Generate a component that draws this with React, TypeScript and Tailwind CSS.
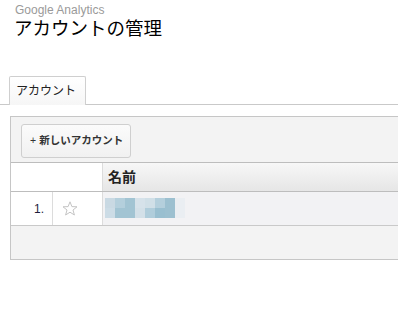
const jp = "font-['Liberation_Sans','Noto_Sans_CJK_JP',sans-serif]";

const mosaic = [
    ['#c9d9e3', '#b4cfdc', '#a2c4d3', '#d6e2ea', '#d0dfe7', '#b4cfdc', '#9cc0d0', '#eaeef2'],
    ['#ccdce6', '#a2c4d3', '#a2c4d3', '#d3e0e8', '#b0cddb', '#99bfd0', '#9cc0d0', '#eaeef2'],
];

function Star() {
    return (
        <svg width="16" height="15" viewBox="0 0 16 15">
            <polygon
                points="8,0.8 9.9,5.6 15,5.8 11,9 12.4,14 8,11.2 3.6,14 5,9 1,5.8 6.1,5.6"
                fill="none"
                stroke="#c4c4c4"
                strokeWidth="1"
            />
        </svg>
    );
}

export default function App() {
    return (
        <div className={`w-[398px] h-[321px] bg-white overflow-hidden ${jp}`}>
            {/* page title */}
            <div className="pl-[15px] pt-[3px]">
                <div className="text-[12px] leading-[14px] text-[#9a9a9a]">Google Analytics</div>
                <div className="text-[18.5px] leading-[22px] text-black -ml-px mt-[1px]">アカウントの管理</div>
            </div>

            {/* tabs */}
            <div className="mt-[36px] flex items-end border-b border-[#c9c9c9] h-[29px]">
                <div className="ml-[9px] -mb-px w-[77px] h-[29px] border border-b-0 border-[#cfcfcf] rounded-t-[2px] bg-gradient-to-b from-white to-[#f6f6f6] flex items-center pl-[6px] text-[12px] text-[#222]">
                    アカウント
                </div>
            </div>

            {/* accounts panel */}
            <div className="ml-[10px] mt-[11px] border-l border-t border-b border-[#c6c6c6]">
                <div className="h-[46px] bg-[#f3f3f3] border-b border-[#bdbdbd] pl-[10px] pt-[7px]">
                    <button className="w-[110px] h-[34px] rounded-[3px] border border-[#cfcfcf] bg-gradient-to-b from-[#fbfbfb] to-[#f1f1f1] text-[10.5px] font-bold text-[#333] flex items-center pl-[8px]">
                        <span className="mr-[3px] font-normal">+</span>新しいアカウント
                    </button>
                </div>

                <div className="flex h-[29px] border-b border-[#bdbdbd]">
                    <div className="w-[92px] bg-white border-r border-[#dcdcdc]" />
                    <div className="flex-1 bg-gradient-to-b from-[#f7f7f7] to-[#e6e6e6] flex items-center pl-[5px] text-[14px] font-bold text-[#222]">
                        名前
                    </div>
                </div>

                <div className="flex h-[34px] border-b border-[#c9c9c9]">
                    <div className="w-[42px] bg-white border-r border-[#dcdcdc] flex items-center justify-end pr-[8px] text-[12px] text-[#1e1e3c]">
                        1.
                    </div>
                    <div className="w-[50px] bg-white border-r border-[#dcdcdc] flex items-center pl-[9px]">
                        <Star />
                    </div>
                    <div className="flex-1 bg-[#f2f2f4] pl-[2px] pt-[6px]">
                        {mosaic.map((row, r) => (
                            <div key={r} className="flex">
                                {row.map((c, i) => (
                                    <div key={i} className="w-[10px] h-[10px]" style={{ background: c }} />
                                ))}
                            </div>
                        ))}
                    </div>
                </div>

                <div className="h-[33px] bg-[#f3f3f3]" />
            </div>
        </div>
    );
}
